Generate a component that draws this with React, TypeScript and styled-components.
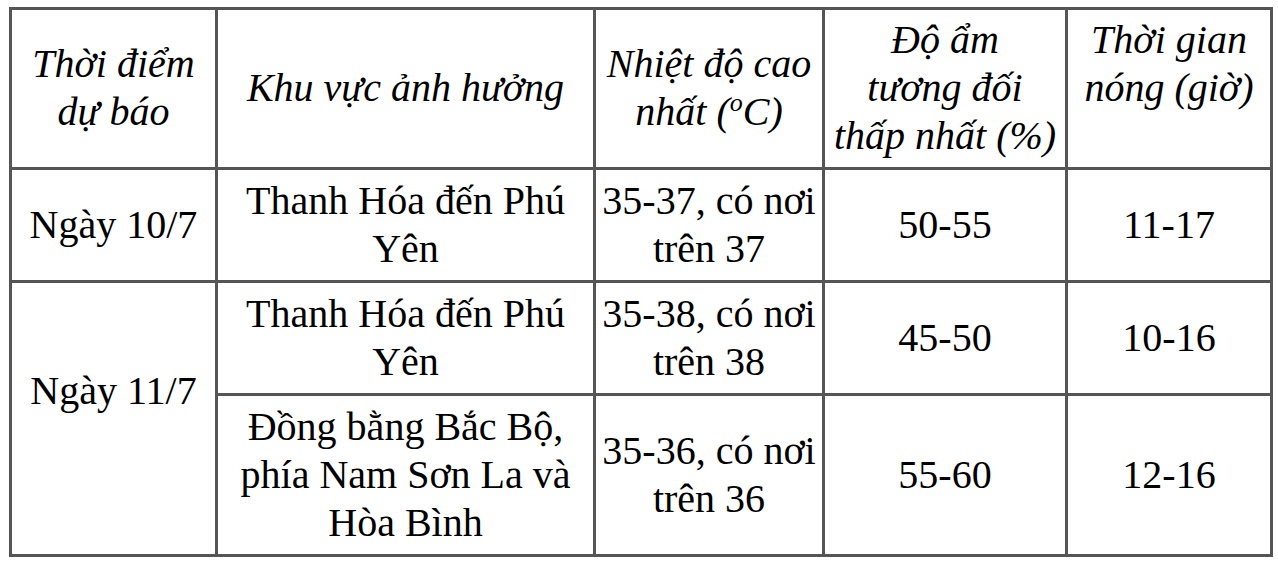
import React from "react";
import styled, { createGlobalStyle } from "styled-components";

const GlobalStyle = createGlobalStyle`
  html, body {
    margin: 0;
    padding: 0;
    background: #ffffff;
  }
  body {
    font-family: "Liberation Serif", "Times New Roman", serif;
    color: #000;
  }
`;

const Page = styled.div`
  padding: 7px 0 0 9px;
`;

const Table = styled.table`
  border-collapse: collapse;
  table-layout: fixed;
  width: 1261px;
  font-family: "Liberation Serif", "Times New Roman", serif;
  font-size: 40px;
  line-height: 48px;
  color: #000;
  border: 3px solid #555;
`;

const Th = styled.th<{ $top?: boolean }>`
  border: 3px solid #555;
  padding: 6px 4px 7px;
  font-weight: 400;
  font-style: italic;
  text-align: center;
  vertical-align: ${(p) => (p.$top ? "top" : "middle")};
`;

const Td = styled.td<{ $lift?: number }>`
  border: 3px solid #555;
  padding: 7px 4px ${(p) => 7 + (p.$lift ?? 0)}px;
  text-align: center;
  vertical-align: middle;
`;

const Sup = styled.sup`
  font-size: 26px;
  line-height: 0;
  vertical-align: 14px;
`;

// bảng dự báo nắng nóng
const rows = [
  { day: "Ngày 10/7", area: "Thanh Hóa đến Phú Yên", temp: "35-37, có nơi trên 37", hum: "50-55", hours: "11-17" },
  { day: "Ngày 11/7", area: "Thanh Hóa đến Phú Yên", temp: "35-38, có nơi trên 38", hum: "45-50", hours: "10-16" },
  { day: null, area: "Đồng bằng Bắc Bộ, phía Nam Sơn La và Hòa Bình", temp: "35-36, có nơi trên 36", hum: "55-60", hours: "12-16" },
];

const App: React.FC = () => {
  return (
    <Page>
      <GlobalStyle />
      <Table>
        <colgroup>
          <col style={{ width: 206 }} />
          <col style={{ width: 378 }} />
          <col style={{ width: 229 }} />
          <col style={{ width: 243 }} />
          <col style={{ width: 205 }} />
        </colgroup>
        <thead>
          <tr>
            <Th>Thời điểm dự báo</Th>
            <Th>Khu vực ảnh hưởng</Th>
            <Th>
              Nhiệt độ cao nhất (<Sup>o</Sup>C)
            </Th>
            <Th>
              Độ ẩm
              <br />
              tương đối
              <br />
              thấp nhất (%)
            </Th>
            <Th $top>Thời gian nóng (giờ)</Th>
          </tr>
        </thead>
        <tbody>
          {rows.map((r, i) => (
            <tr key={i}>
              {r.day && (
                <Td rowSpan={i === 1 ? 2 : 1} $lift={i === 1 ? 56 : 0}>
                  {r.day}
                </Td>
              )}
              <Td>{r.area}</Td>
              <Td>{r.temp}</Td>
              <Td>{r.hum}</Td>
              <Td>{r.hours}</Td>
            </tr>
          ))}
        </tbody>
      </Table>
    </Page>
  );
};

export default App;
